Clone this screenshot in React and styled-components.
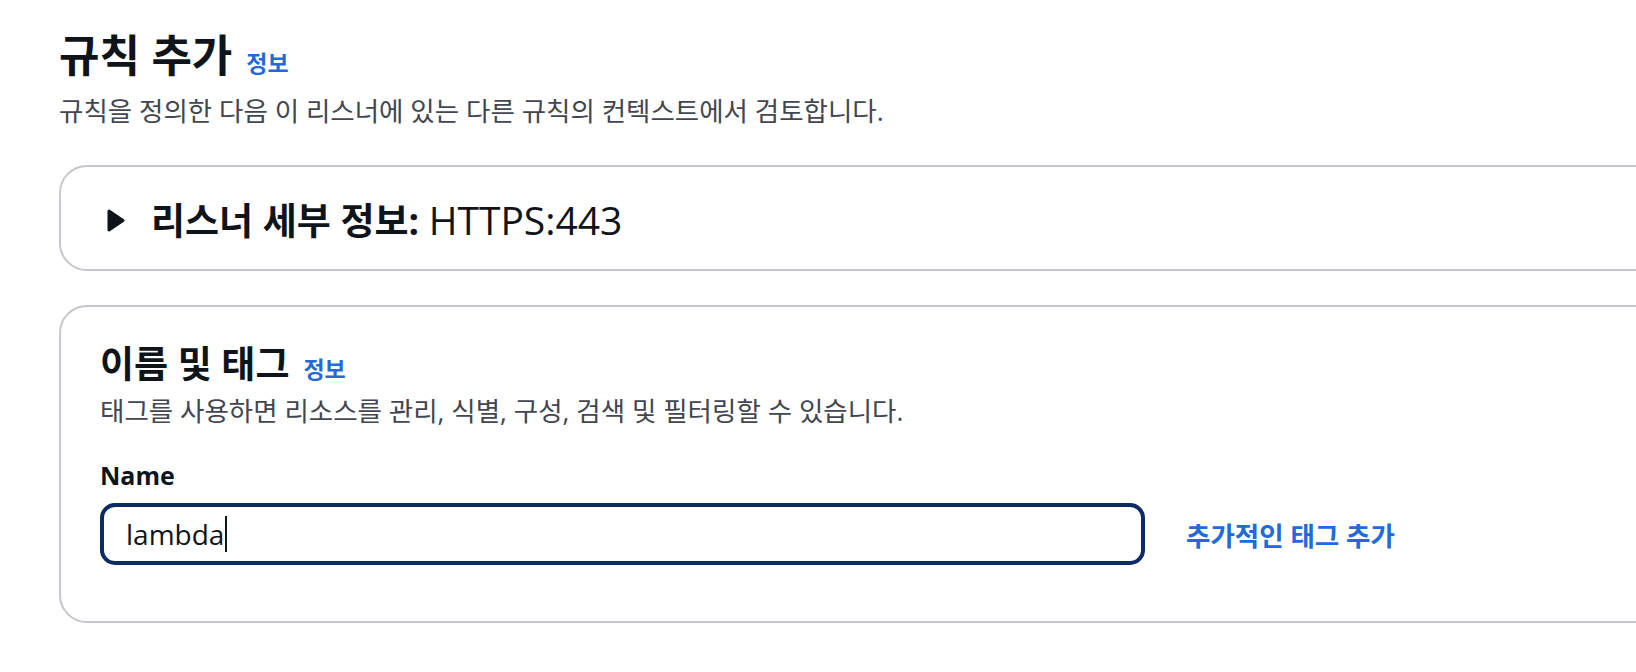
import React from 'react';
import styled, { createGlobalStyle } from 'styled-components';

const Global = createGlobalStyle`
  html, body { margin: 0; padding: 0; background: #ffffff; overflow: hidden; }
  body {
    font-family: "Open Sans", "Noto Sans CJK KR", sans-serif;
    color: #0f141a;
    -webkit-font-smoothing: antialiased;
  }
`;

const Page = styled.main`
  width: 1720px;
  padding: 29px 0 0 59px;
  display: flex;
  flex-direction: column;
`;

const HeaderRow = styled.div`
  display: flex;
  align-items: baseline;
  gap: 14px;
`;

const PageTitle = styled.h1`
  margin: 0;
  font-size: 44px;
  line-height: 52px;
  font-weight: 700;
  color: #0f141a;
`;

const InfoLink = styled.a`
  font-size: 23px;
  font-weight: 700;
  color: #2369d8;
  text-decoration: none;
  cursor: pointer;
`;

const Description = styled.p`
  margin: ${p => p.$top}px 0 0;
  font-size: 26.5px;
  line-height: 34px;
  color: #424650;
`;

const Card = styled.section`
  margin-top: ${p => p.$top}px;
  border: 2px solid #c6c6cd;
  border-radius: 28px;
  background: #fff;
  padding: ${p => p.$pad};
`;

const ExpandHeader = styled.div`
  display: flex;
  align-items: center;
  height: 48px;
  gap: 26px;
  padding-left: 6px;
`;

const ExpandTitle = styled.h2`
  margin: 0;
  font-size: 37px;
  line-height: 48px;
  font-weight: 700;
  color: #0f141a;
`;

const Plain = styled.span`
  font-weight: 400;
  font-size: 39px;
`;

const SectionHeaderRow = styled.div`
  display: flex;
  align-items: baseline;
  gap: 14px;
`;

const SectionTitle = styled.h2`
  margin: 0;
  font-size: 37px;
  line-height: 44px;
  font-weight: 700;
  color: #0f141a;
`;

const FieldLabel = styled.label`
  display: block;
  margin-top: 30px;
  font-size: 25px;
  line-height: 34px;
  font-weight: 700;
  color: #0f141a;
`;

const FieldRow = styled.div`
  margin-top: 11px;
  display: flex;
  align-items: center;
  gap: 41px;
`;

const InputBox = styled.div`
  box-sizing: border-box;
  width: 1045px;
  height: 62px;
  border: 4px solid #0b2b62;
  border-radius: 15px;
  padding-left: 22px;
  display: flex;
  align-items: center;
  font-size: 28px;
  color: #0f141a;
`;

const Caret = styled.span`
  display: inline-block;
  width: 2px;
  height: 36px;
  margin-left: 1px;
  background: #0f141a;
`;

const ActionLink = styled.a`
  font-size: 26.5px;
  font-weight: 700;
  color: #2369d8;
  text-decoration: none;
  cursor: pointer;
`;

const CaretRight = () => (
  <svg width="18" height="23" viewBox="0 0 18 23" aria-hidden="true">
    <path d="M2 2 L16 11.5 L2 21 Z" fill="#0f141a" stroke="#0f141a" strokeWidth="3" strokeLinejoin="round" />
  </svg>
);

export default function App() {
  return (
    <>
      <Global />
      <Page>
        <HeaderRow>
          <PageTitle>규칙 추가</PageTitle>
          <InfoLink>정보</InfoLink>
        </HeaderRow>
        <Description $top={13}>규칙을 정의한 다음 이 리스너에 있는 다른 규칙의 컨텍스트에서 검토합니다.</Description>

        <Card $top={37} $pad="29px 0 25px 40px">
          <ExpandHeader>
            <CaretRight />
            <ExpandTitle>
              리스너 세부 정보: <Plain>HTTPS:443</Plain>
            </ExpandTitle>
          </ExpandHeader>
        </Card>

        <Card $top={34} $pad="35px 0 56px 39px">
          <SectionHeaderRow>
            <SectionTitle>이름 및 태그</SectionTitle>
            <InfoLink>정보</InfoLink>
          </SectionHeaderRow>
          <Description $top={8}>태그를 사용하면 리소스를 관리, 식별, 구성, 검색 및 필터링할 수 있습니다.</Description>
          <FieldLabel>Name</FieldLabel>
          <FieldRow>
            <InputBox>
              lambda<Caret />
            </InputBox>
            <ActionLink>추가적인 태그 추가</ActionLink>
          </FieldRow>
        </Card>
      </Page>
    </>
  );
}
